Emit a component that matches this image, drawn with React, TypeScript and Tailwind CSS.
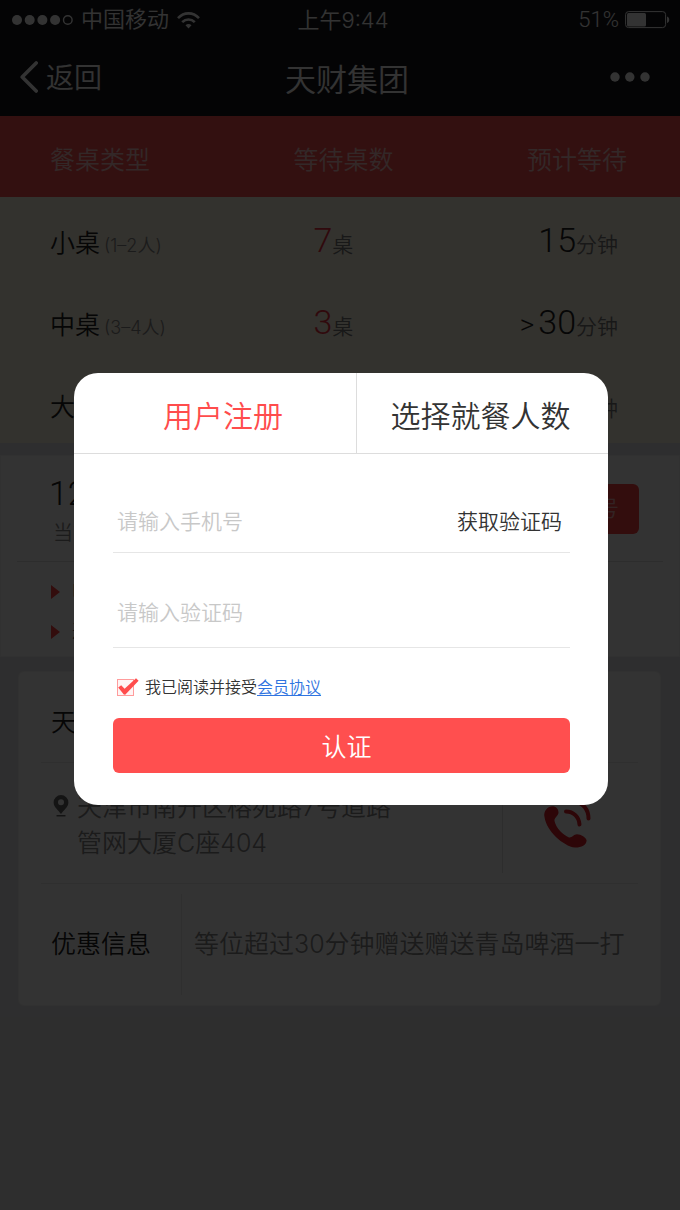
import React, { useState } from 'react';

const tables = [
  { name: '小桌', range: '(1–2人)', waiting: 7, prefix: '', minutes: 15 },
  { name: '中桌', range: '(3–4人)', waiting: 3, prefix: '>', minutes: 30 },
  { name: '大桌', range: '(5–8人)', waiting: 5, prefix: '', minutes: 5 },
];

const notices = ['叫号后请及时就餐', '过号需重新取号'];

function StatusBar() {
  return (
    <div className="grid h-10 grid-cols-3 items-center pl-3 pr-2.5 text-[22px] leading-none">
      <div className="flex items-center">
        <svg className="mr-2 h-3 w-[61px]" viewBox="0 0 61 12" fill="currentColor">
          <circle cx="5" cy="6" r="5" />
          <circle cx="17.7" cy="6" r="5" />
          <circle cx="30.4" cy="6" r="5" />
          <circle cx="43.1" cy="6" r="5" />
          <circle cx="55.8" cy="6" r="4.3" fill="none" stroke="currentColor" strokeWidth="1.4" />
        </svg>
        <span className="whitespace-nowrap">中国移动</span>
        <svg className="ml-2 h-[17px] w-[23px] shrink-0" viewBox="0 0 23 17" fill="none" stroke="currentColor" strokeWidth="2.6">
          <path d="M1 6.200C7-.2 16-.2 22 6.200M5.200 10.200c3.700-3.700 8.900-3.700 12.600 0" />
          <path d="M11.500 16.500l-3-3.300c1.700-1.700 4.300-1.700 6 0z" fill="currentColor" stroke="none" />
        </svg>
      </div>
      <div className="pl-1 text-center font-[Inter,'Noto_Sans_CJK_SC',sans-serif]">上午9:44</div>
      <div className="flex items-center justify-end gap-1.5">
        <span>51%</span>
        <svg className="h-[18px] w-[45px]" viewBox="0 0 45 18">
          <rect x="0.6" y="0.6" width="40" height="16" rx="3" fill="none" stroke="currentColor" strokeWidth="1" />
          <rect x="2" y="2" width="19" height="13.4" rx="1.5" fill="currentColor" />
          <path d="M42 5.500c3 .6 3 5.800 0 6.400z" fill="currentColor" />
        </svg>
      </div>
    </div>
  );
}

function NavBar() {
  return (
    <div className="grid h-[76px] grid-cols-[1fr_auto_1fr] items-center pl-5 pr-[30px] pb-0.5">
      <a href="#back" className="flex items-center gap-2 text-[28px] leading-none">
        <svg className="h-8 w-[18px]" viewBox="0 0 18 32" fill="none" stroke="currentColor" strokeWidth="3.6" strokeLinecap="round" strokeLinejoin="round">
          <path d="M16.200 2L2.200 16l14 14" />
        </svg>
        <span className="pt-1">返回</span>
      </a>
      <h1 className="pl-6 pt-1.5 text-[31px] leading-none">天财集团</h1>
      <button type="button" aria-label="更多" className="justify-self-end">
        <svg className="h-[10px] w-10" viewBox="0 0 40 10" fill="currentColor">
          <circle cx="5" cy="5" r="4.700" />
          <circle cx="19.800" cy="5" r="4.700" />
          <circle cx="35" cy="5" r="4.700" />
        </svg>
      </button>
    </div>
  );
}

function WaitTable() {
  return (
    <table className="w-full table-fixed bg-[#fff8e4] leading-none">
      <thead>
        <tr className="h-[81px] bg-[#ff5050] text-[25px] text-white/70">
          <th className="w-[36%] pl-[50px] pt-2 text-left font-[350]">餐桌类型</th>
          <th className="w-[29%] pt-2 text-center font-[350]">等待桌数</th>
          <th className="pr-[53px] pt-2 text-right font-[350]">预计等待</th>
        </tr>
      </thead>
      <tbody className="align-baseline text-[#222]">
        {tables.map((t) => (
          <tr key={t.name} className="h-[82px]">
            <td className="pl-[50px] pt-[26px] text-[25px]">
              {t.name}
              <span className="ml-1 font-[Inter,'Noto_Sans_CJK_SC',sans-serif] text-lg leading-none text-[#888]">{t.range}</span>
            </td>
            <td className="pr-5 pt-[26px] text-center text-[21px] text-[#777]">
              <span className="text-[34px] text-[#f03040]">{t.waiting}</span>桌
            </td>
            <td className="pr-[62px] pt-[26px] text-right text-[21px] text-[#777]">
              {t.prefix && <span className="mr-1 text-[28px] text-[#222]">{t.prefix}</span>}
              <span className="text-[34px] text-[#222]">{t.minutes}</span>分钟
            </td>
          </tr>
        ))}
      </tbody>
    </table>
  );
}

function QueueCard() {
  return (
    <section className="mt-3 border border-[#f6f6f6] bg-white px-4">
      <div className="flex h-[106px] items-center justify-between border-b border-[#e2e2e2] pl-8 pr-6">
        <div className="pt-2">
          <p className="text-[34px] leading-10 text-[#222]">128号</p>
          <p className="pl-1 text-xl leading-10 text-[#888]">当前排队号</p>
        </div>
        <button type="button" className="h-[50px] w-[84px] rounded-md bg-[#ff4040] text-[22px] text-white/60">
          取号
        </button>
      </div>
      <ul className="pb-1 pl-[34px] pt-2.5 text-lg text-[#666]">
        {notices.map((n) => (
          <li key={n} className="flex h-10 items-center gap-3">
            <svg className="h-[14px] w-[9px]" viewBox="0 0 9 14" fill="#ff4040">
              <path d="M0 0l9 7-9 7z" />
            </svg>
            {n}
          </li>
        ))}
      </ul>
    </section>
  );
}

function StoreCard() {
  return (
    <section className="ml-[18px] mr-[19px] mt-[14px] rounded-md border border-[#f2f2f2] bg-white px-[22px] text-[25px]">
      <h2 className="h-[91px] border-b border-[#e8e8e8] pl-2.5 pt-3 leading-[78px] text-[#222]">天财集团</h2>
      <div className="flex h-[121px] items-stretch border-b border-[#e8e8e8] py-2.5">
        <div className="flex flex-1 gap-2 pl-3 pt-4">
          <svg className="mt-1.5 h-[22px] w-4 shrink-0" viewBox="0 0 16 22" fill="#666">
            <path fillRule="evenodd" d="M8 0a7.400 7.400 0 0 1 7.400 7.400C15.400 12 10.500 15.200 8 19 5.500 15.200.6 12 .6 7.400A7.400 7.400 0 0 1 8 0zm0 4.300a3 3 0 1 0 0 6 3 3 0 0 0 0-6z" />
            <path d="M3.500 20h9v1.500h-9z" />
          </svg>
          <address className="font-[Inter,'Noto_Sans_CJK_SC',sans-serif] leading-9 not-italic text-[#888]">
            天津市南开区榕苑路7号道路
            <br />
            管网大厦C座404
          </address>
        </div>
        <a href="tel:022" aria-label="拨打电话" className="flex w-[136px] items-center border-l border-[#e2e2e2] pl-10">
          <svg className="h-[50px] w-[50px]" viewBox="0 0 50 50">
            <path
              d="M1.500 19C0 13 5 8 10 8.200c3.500.3 5.500 3.300 5.500 6.300 0 3.500-4.500 5-4 8.500C13 30 20 37 26 39.500c3 .5 4.500-3 8-3.200 4 0 9.200 3.200 9.600 6.200C43.500 47 38 49.800 32 49.600 20 48 3.500 33 1.500 19z"
              fill="#e02028"
            />
            <path d="M23 13.500c7.500 0 13 5.500 13.500 13M31 3.500c9 1 14.500 8 14.500 17" fill="none" stroke="#e02028" strokeWidth="4" strokeLinecap="round" />
          </svg>
        </a>
      </div>
      <div className="flex h-[121px] items-center py-2.5">
        <h3 className="w-[140px] shrink-0 pl-2.5 text-[#222]">优惠信息</h3>
        <p className="flex h-full flex-1 items-center whitespace-nowrap border-l border-[#e8e8e8] pl-3 font-[Inter,'Noto_Sans_CJK_SC',sans-serif] text-[#888]">
          等位超过30分钟赠送赠送青岛啤酒一打
        </p>
      </div>
    </section>
  );
}

function RegisterDialog() {
  const [agreed, setAgreed] = useState(true);

  return (
    <div role="dialog" aria-modal="true" aria-label="用户注册" className="w-full overflow-hidden rounded-3xl bg-white text-[#333]">
      <div className="flex h-[81px] border-b border-[#ddd] text-[30px] leading-none">
        <button type="button" className="w-[53%] border-r border-[#ddd] pl-4 pt-2 text-[#ff4c4c]">
          用户注册
        </button>
        <button type="button" className="flex-1 pr-1 pt-2">
          选择就餐人数
        </button>
      </div>

      <form className="pb-8 pl-[39px] pr-[38px]" onSubmit={(e) => e.preventDefault()}>
        <div className="flex h-[99px] items-center border-b border-[#e6e6e6] pl-1 pr-2 pt-10 text-[21px]">
          <input
            type="tel"
            aria-label="手机号"
            placeholder="请输入手机号"
            className="min-w-0 flex-1 bg-transparent outline-none placeholder:text-[#c8c8c8]"
          />
          <button type="button" className="whitespace-nowrap">获取验证码</button>
        </div>
        <div className="flex h-[95px] items-center border-b border-[#e6e6e6] pl-1 pr-2 pt-7 text-[21px]">
          <input
            type="text"
            aria-label="验证码"
            placeholder="请输入验证码"
            className="min-w-0 flex-1 bg-transparent outline-none placeholder:text-[#c8c8c8]"
          />
        </div>

        <div className="flex h-[70px] items-center pl-1 pt-2.5 text-base">
          <label className="flex items-center">
            <span className="relative mr-1.5 h-6 w-[22px]">
              <input
                type="checkbox"
                checked={agreed}
                onChange={(e) => setAgreed(e.target.checked)}
                className="absolute left-0 top-[3px] h-[17px] w-[17px] appearance-none border border-[#ff9c9c] bg-[#fff4f4]"
              />
              {agreed && (
                <svg className="pointer-events-none absolute left-0 top-0.5 h-5 w-[22px]" viewBox="0 0 22 20" fill="#ff4c4c">
                  <path d="M1.200 9.500l3-2.300 3.400 3.600L19 .2l2.600 2.600L8.200 16.800 6.800 16.600z" />
                </svg>
              )}
            </span>
            我已阅读并接受
          </label>
          <a href="#agreement" className="text-[#2f74e0] underline underline-offset-2">会员协议</a>
        </div>

        <button type="submit" className="h-[55px] w-full rounded-md bg-[#ff4f4f] pl-2.5 pt-1 text-[25px] leading-none text-white">
          认证
        </button>
      </form>
    </div>
  );
}

export default function App() {
  return (
    <div className="relative min-h-screen bg-[#e6e6e8] font-[Roboto,'Noto_Sans_CJK_SC',sans-serif] font-[350]">
      <header className="bg-[#16161c] text-white">
        <StatusBar />
        <NavBar />
      </header>
      <WaitTable />
      <QueueCard />
      <StoreCard />

      <div className="absolute inset-0 flex items-start bg-black/80 pl-[74px] pr-[72px] pt-[373px]">
        <RegisterDialog />
      </div>
    </div>
  );
}
